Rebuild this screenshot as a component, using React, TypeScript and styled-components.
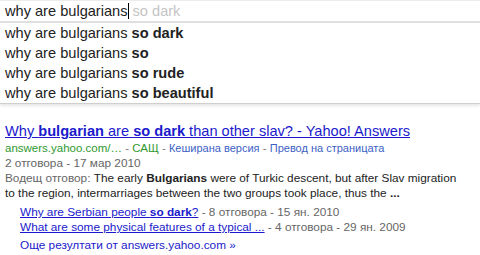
import React from "react";
import styled, { createGlobalStyle } from "styled-components";

const Global = createGlobalStyle`
  html, body { margin: 0; padding: 0; background: #fff; }
  body { font-family: Arial, "Liberation Sans", sans-serif; }
`;

const Page = styled.div`
  width: 480px;
  height: 255px;
  overflow: hidden;
  background: #fff;
`;

const SearchBox = styled.div`
  height: 20px;
  border-top: 1px solid #ececec;
  border-bottom: 2px solid #e0e0e0;
  display: flex;
  align-items: center;
  padding-left: 5px;
  font-size: 14.6px;
  color: #222;
  white-space: pre;
`;

const Caret = styled.span`
  display: inline-block;
  width: 1px;
  height: 16px;
  background: #000;
`;

const Hint = styled.span`
  color: #c4c4c4;
`;

const Dropdown = styled.div`
  padding: 0 0 0 5px;
  border-bottom: 1px solid #cfcfcf;
  box-shadow: 0 2px 3px rgba(0, 0, 0, 0.1);
`;

const Suggestion = styled.div`
  height: 20px;
  line-height: 20px;
  font-size: 14.6px;
  color: #222;
  white-space: nowrap;
`;

const Result = styled.div`
  padding: 17px 0 0 5px;
`;

const Title = styled.a`
  display: block;
  font-size: 14.6px;
  line-height: 20px;
  color: #1a1acc;
  text-decoration: underline;
  white-space: nowrap;
`;

const UrlLine = styled.div`
  font-size: 11.5px;
  line-height: 15px;
  color: #2f9a2f;
  white-space: nowrap;
`;

const Sep = styled.span`
  color: #777;
`;

const Cache = styled.span`
  font-size: 11px;
  color: #3b5fc4;
`;

const Meta = styled.div`
  font-size: 11.8px;
  line-height: 15px;
  color: #666;
  white-space: nowrap;
`;

const Snippet = styled.div`
  font-size: 11.8px;
  line-height: 15px;
  color: #222;
  width: 462px;
`;

const Label = styled.span`
  color: #666;
`;

const SubList = styled.div`
  padding: 4px 0 0 15px;
`;

const SubRow = styled.div`
  font-size: 11.8px;
  line-height: 15px;
  color: #666;
  white-space: nowrap;
`;

const SubLink = styled.a`
  color: #1a1acc;
  text-decoration: underline;
`;

const More = styled.a`
  display: block;
  margin-top: 3px;
  font-size: 11.8px;
  line-height: 15px;
  color: #1a1acc;
  text-decoration: none;
`;

export default function App() {
  const base = "why are bulgarians ";
  return (
    <Page>
      <Global />
      <SearchBox>
        <span>why are bulgarians</span>
        <Caret />
        <Hint> so dark</Hint>
      </SearchBox>
      <Dropdown>
        <Suggestion>{base}<b>so dark</b></Suggestion>
        <Suggestion>{base}<b>so</b></Suggestion>
        <Suggestion>{base}<b>so rude</b></Suggestion>
        <Suggestion>{base}<b>so beautiful</b></Suggestion>
      </Dropdown>
      <Result>
        <Title>Why <b>bulgarian</b> are <b>so dark</b> than other slav? - Yahoo! Answers</Title>
        <UrlLine>
          answers.yahoo.com/… <Sep>- </Sep>САЩ<Sep> - </Sep><Cache>Кеширана версия</Cache><Sep> - </Sep><Cache>Превод на страницата</Cache>
        </UrlLine>
        <Meta>2 отговора - 17 мар 2010</Meta>
        <Snippet>
          <Label>Водещ отговор: </Label>The early <b>Bulgarians</b> were of Turkic descent, but after Slav migration to the region, intermarriages between the two groups took place, thus the <b>...</b>
        </Snippet>
        <SubList>
          <SubRow><SubLink>Why are Serbian people <b>so dark</b>?</SubLink> - 8 отговора - 15 ян. 2010</SubRow>
          <SubRow><SubLink>What are some physical features of a typical ...</SubLink> - 4 отговора - 29 ян. 2009</SubRow>
          <More>Още резултати от answers.yahoo.com »</More>
        </SubList>
      </Result>
    </Page>
  );
}
